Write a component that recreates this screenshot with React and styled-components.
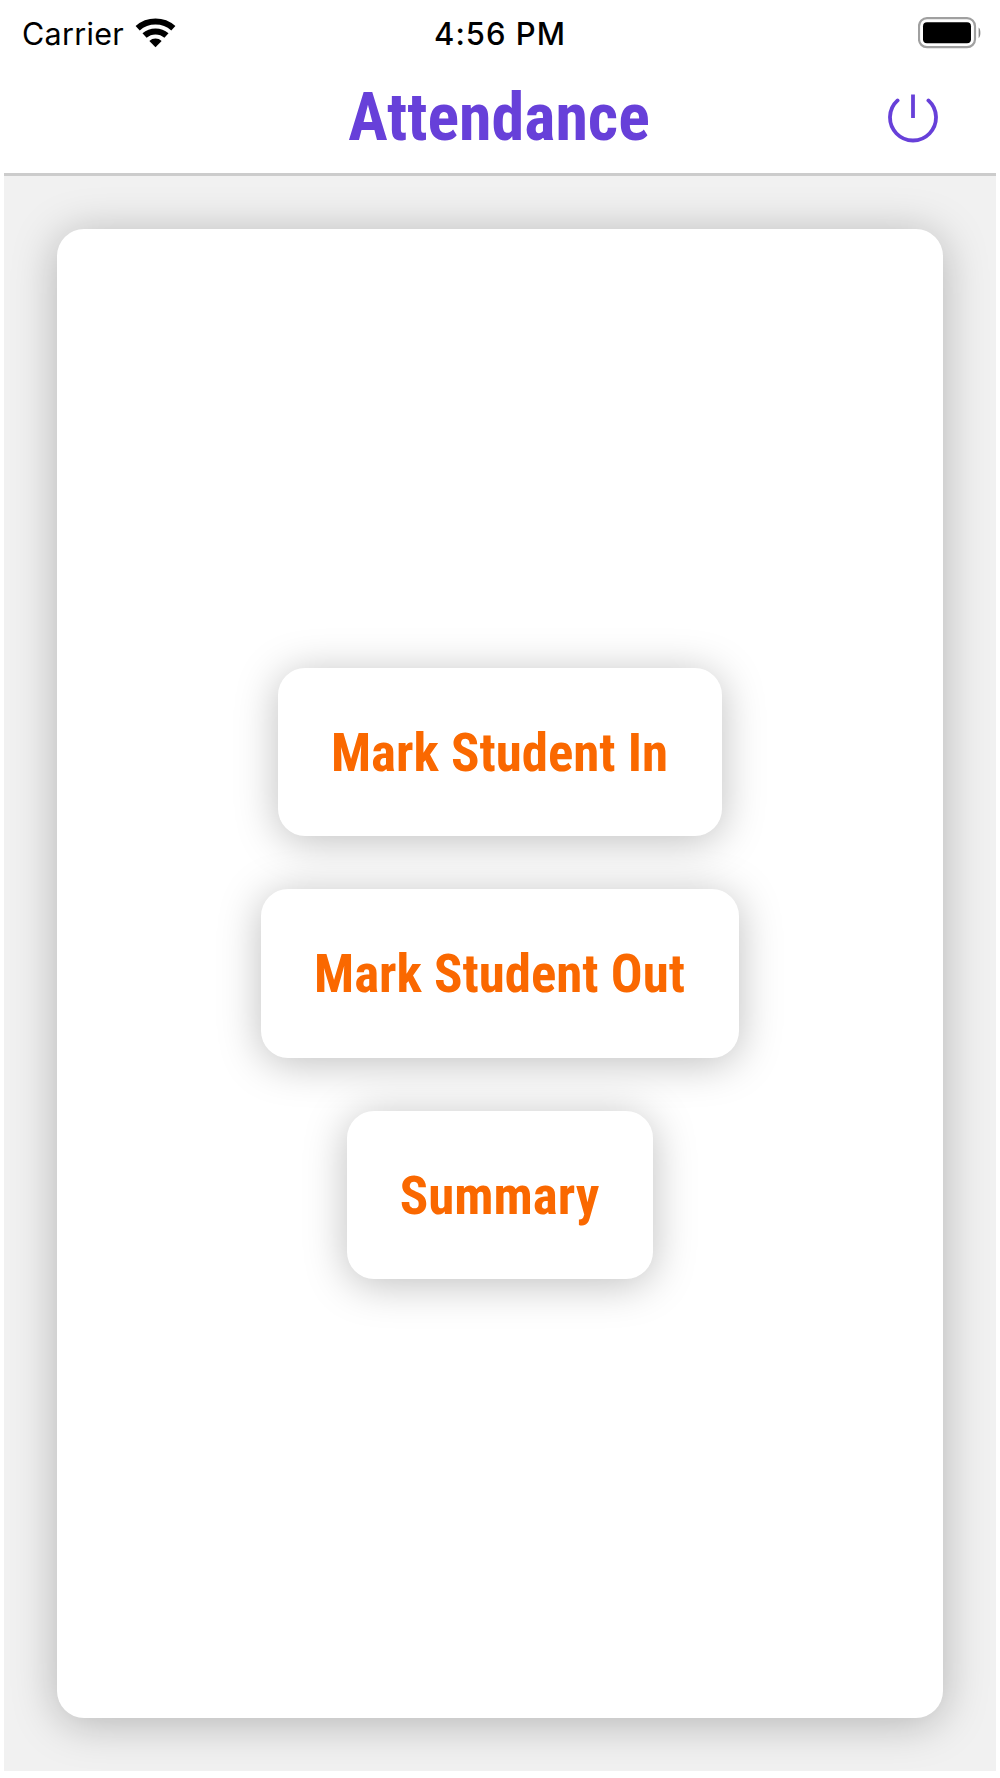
import React from 'react';
import styled, { createGlobalStyle } from 'styled-components';

const GlobalStyle = createGlobalStyle`
  body {
    margin: 0;
    background-color: #ffffff;
  }
`

const Screen = styled.div`
  box-sizing: border-box;
  width: 1000px;
  height: 1778px;
  padding: 0 4px 7px;
  display: flex;
  flex-direction: column;
  background-color: #ffffff;
`

const StatusBar = styled.div`
  box-sizing: border-box;
  height: 66px;
  padding: 0 14px 0 18px;
  display: grid;
  grid-template-columns: 1fr auto 1fr;
  align-items: center;
  font-family: Inter, "Liberation Sans", sans-serif;
  font-size: 30.5px;
  color: #000000;
`

const Carrier = styled.div`
  display: flex;
  align-items: center;
  gap: 11px;
  letter-spacing: 0.3px;
`

const Clock = styled.div`
  font-size: 31px;
  font-weight: 550;
  letter-spacing: 1px;
  margin-right: 4px;
`

const Battery = styled.svg`
  justify-self: end;
`

const Header = styled.header`
  box-sizing: border-box;
  height: 110px;
  padding: 0 58px 4px 56px;
  display: grid;
  grid-template-columns: 1fr auto 1fr;
  align-items: center;
  border-bottom: 3px solid #cccccc;
`

const Title = styled.h1`
  grid-column: 2;
  margin: 0;
  font-family: "Roboto Condensed", Roboto, sans-serif;
  font-stretch: 75%;
  font-size: 66px;
  font-weight: 700;
  color: #6740d9;
`

const LogoutButton = styled.button`
  justify-self: end;
  display: flex;
  padding: 0;
  border: none;
  background: none;
`

const Content = styled.main`
  flex: 1;
  display: flex;
  padding: 53px;
  background-color: #f1f1f1;
  overflow: hidden;
`

const Card = styled.section`
  flex: 1;
  display: flex;
  flex-direction: column;
  align-items: center;
  justify-content: center;
  gap: 53px;
  border-radius: 27px;
  background-color: #ffffff;
  box-shadow: 0 5px 45px rgba(0, 0, 0, 0.26);
`

const MenuButton = styled.button`
  height: 168.5px;
  padding: 1px 54px 0 53px;
  border: none;
  border-radius: 27px;
  background-color: #ffffff;
  box-shadow: 0 5px 43px rgba(0, 0, 0, 0.26);
  font-family: "Roboto Condensed", Roboto, sans-serif;
  font-stretch: 75%;
  font-size: 52.9px;
  font-weight: 700;
  color: #fa6800;
`

const WifiIcon = () => (
  <svg width="41" height="30" viewBox="0 0 40 30" preserveAspectRatio="none">
    <g fill="none" stroke="#000000" strokeWidth="6">
      <path d="M2.6 10.2a26 26 0 0 1 34.8 0" />
      <path d="M9.3 17.6a16 16 0 0 1 21.4 0" />
    </g>
    <path d="M20 29.3l-6-6.4a8.8 8.8 0 0 1 12 0z" fill="#000000" />
  </svg>
)

const BatteryIcon = () => (
  <Battery width="64" height="32" viewBox="0 0 64 32">
    <rect x="1" y="1.2" width="56" height="29" rx="8" fill="none" stroke="#a0a0a0" strokeWidth="2.2" />
    <rect x="5" y="5.2" width="48" height="21" rx="4" fill="#000000" />
    <path d="M60.6 10.6c2.4 1.6 2.4 9 0 10.6z" fill="#8a8a8a" />
  </Battery>
)

const PowerIcon = () => (
  <svg width="50" height="50" viewBox="0 0 50 50" fill="none" stroke="#6740d9" strokeWidth="3.8">
    <path d="M25 1.5v23.5" />
    <path d="M9.6 7.4a23 23 0 1 0 30.8 0" strokeLinecap="round" />
  </svg>
)

const App = () => {
  return (
    <>
      <GlobalStyle />
      <Screen>
        <StatusBar>
          <Carrier>
            Carrier
            <WifiIcon />
          </Carrier>
          <Clock>4:56 PM</Clock>
          <BatteryIcon />
        </StatusBar>
        <Header>
          <Title>Attendance</Title>
          <LogoutButton aria-label="Log out">
            <PowerIcon />
          </LogoutButton>
        </Header>
        <Content>
          <Card>
            <MenuButton>Mark Student In</MenuButton>
            <MenuButton>Mark Student Out</MenuButton>
            <MenuButton>Summary</MenuButton>
          </Card>
        </Content>
      </Screen>
    </>
  )
}

export default App
